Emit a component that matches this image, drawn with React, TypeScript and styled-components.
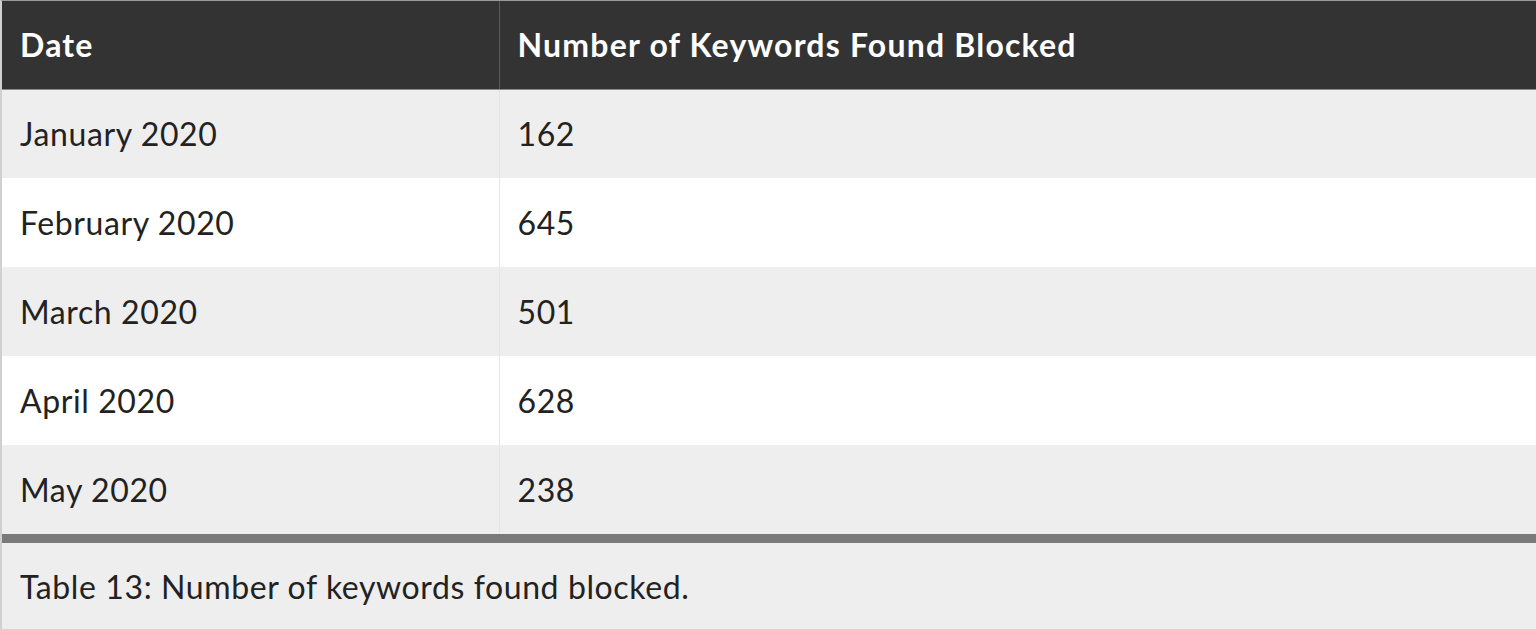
import { createGlobalStyle } from "styled-components";
import styled from "styled-components";

const GlobalStyle = createGlobalStyle`
  html, body {
    margin: 0;
    padding: 0;
    background: #ffffff;
  }
  body {
    font-family: Lato, "Open Sans", sans-serif;
    color: #222;
  }
`;

const Figure = styled.figure`
  margin: 0;
  width: 1536px;
  border-top: 1px solid #9a9a9a;
  border-left: 2px solid #d0d0d0;
  box-sizing: border-box;
`;

const Table = styled.table`
  width: 100%;
  border-collapse: collapse;
  table-layout: fixed;
`;

const HeadCell = styled.th<{ $width?: number }>`
  width: ${(p) => (p.$width ? `${p.$width}px` : "auto")};
  height: 88px;
  padding: 0 18px;
  background: #333333;
  color: #ffffff;
  text-align: left;
  font-size: 32px;
  font-weight: 700;
  letter-spacing: 1.2px;
  border-bottom: 1px solid #8a8a8a;
  box-sizing: border-box;
  & + & {
    border-left: 1px solid #5a5a5a;
  }
`;

const Row = styled.tr<{ $striped: boolean }>`
  background: ${(p) => (p.$striped ? "#eeeeee" : "#ffffff")};
`;

const Cell = styled.td`
  height: 89px;
  padding: 0 18px;
  font-size: 32px;
  letter-spacing: 0.6px;
  color: #222;
  box-sizing: border-box;
  & + & {
    border-left: 1px solid #e6e6e6;
  }
`;

const Caption = styled.figcaption`
  background: #eeeeee;
  border-top: 9px solid #7a7a7a;
  height: 86px;
  display: flex;
  align-items: center;
  padding: 0 18px;
  font-size: 32px;
  letter-spacing: 0.6px;
  color: #222;
`;

const rows = [
  ["January 2020", "162"],
  ["February 2020", "645"],
  ["March 2020", "501"],
  ["April 2020", "628"],
  ["May 2020", "238"],
];

export default function App() {
  return (
    <>
      <GlobalStyle />
      <Figure>
        <Table>
          <thead>
            <tr>
              <HeadCell $width={497}>Date</HeadCell>
              <HeadCell>Number of Keywords Found Blocked</HeadCell>
            </tr>
          </thead>
          <tbody>
            {rows.map(([date, count], i) => (
              <Row key={date} $striped={i % 2 === 0}>
                <Cell>{date}</Cell>
                <Cell>{count}</Cell>
              </Row>
            ))}
          </tbody>
        </Table>
        <Caption>Table 13: Number of keywords found blocked.</Caption>
      </Figure>
    </>
  );
}
